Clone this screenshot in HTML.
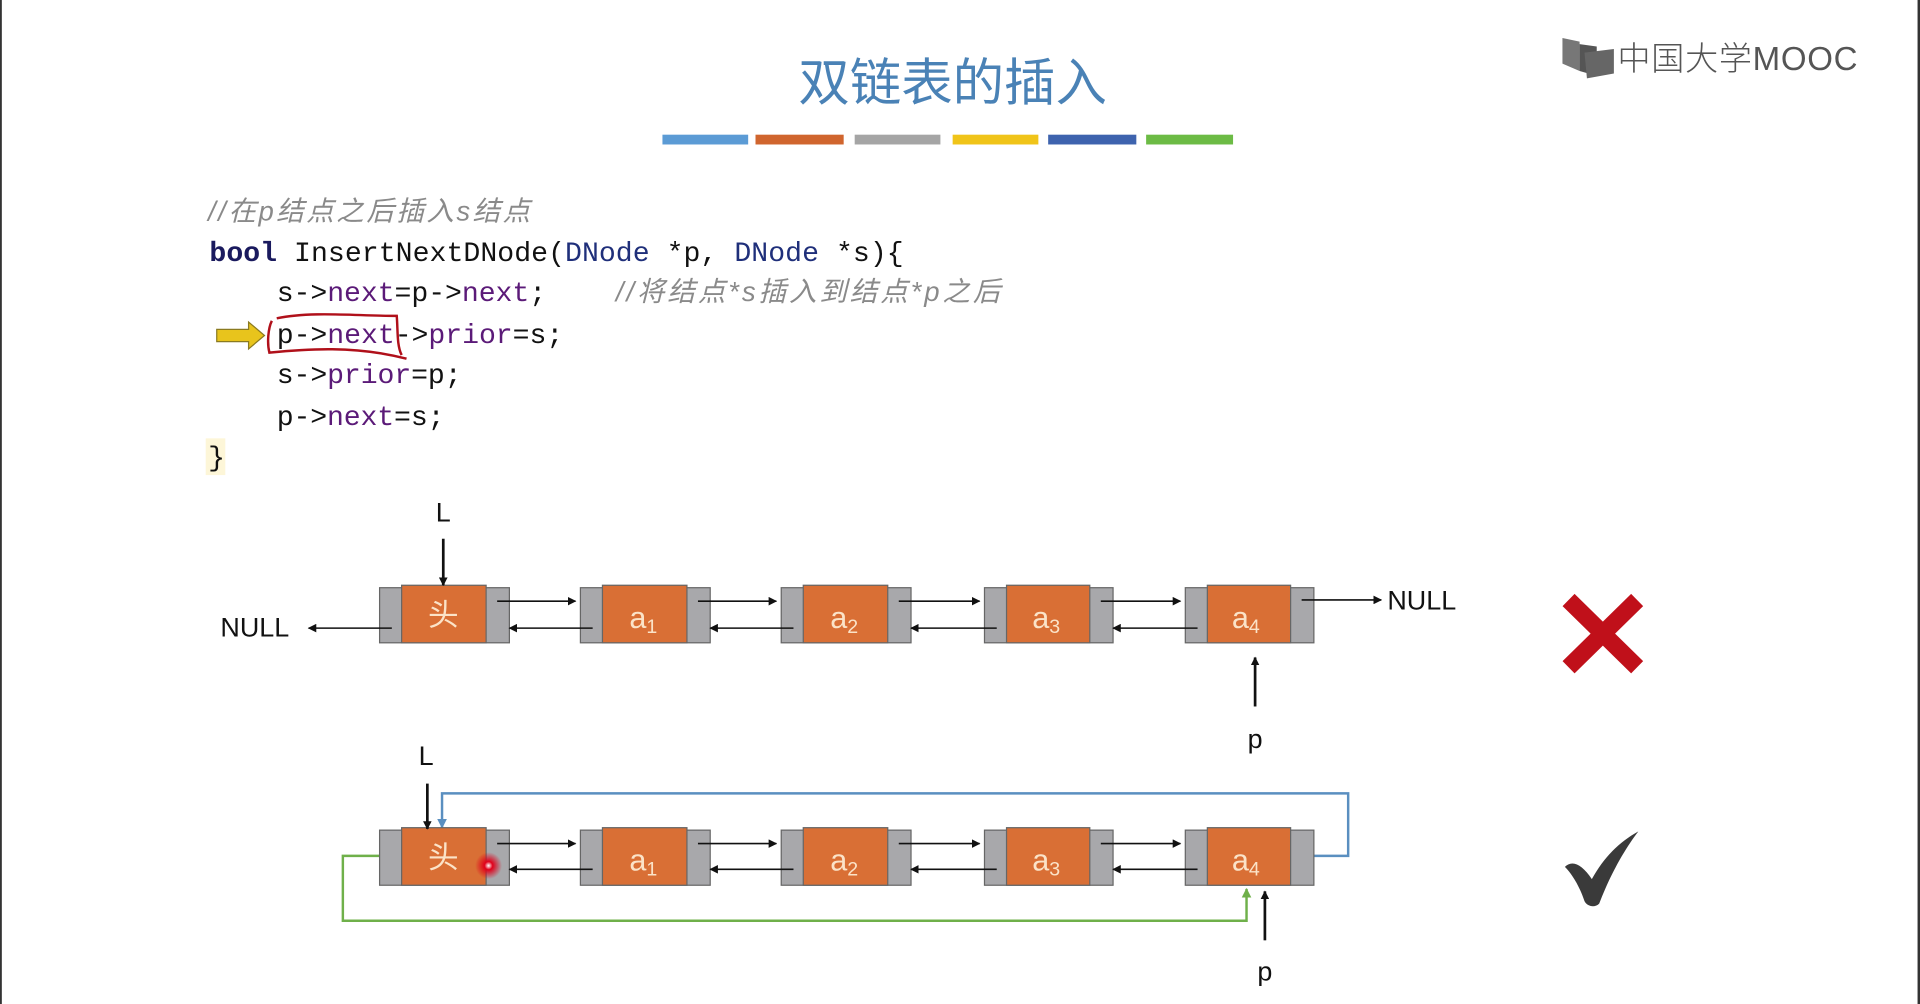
<!DOCTYPE html>
<html><head><meta charset="utf-8"><style>
html,body{margin:0;padding:0;background:#fff;overflow:hidden;width:1920px;height:1004px}
svg{display:block}
.code{font-family:"Liberation Mono","Noto Sans CJK SC",monospace;font-size:23px;fill:#111}
.kw{fill:#5b1a78}
.cm{font-family:"Liberation Sans","Noto Sans CJK SC",sans-serif;font-style:italic;fill:#8a8a8a;font-size:22.5px}
.lbl{font-family:"Liberation Sans",sans-serif;font-size:22px;fill:#111}
.nd{font-family:"Liberation Sans","Noto Sans CJK SC",sans-serif;font-size:25px;fill:#fbe3c8}
</style></head><body>
<svg width="1920" height="1004" viewBox="0 0 1568 820" preserveAspectRatio="none" xmlns="http://www.w3.org/2000/svg">
<defs>
<marker id="ah" viewBox="0 0 10 10" refX="9" refY="5" markerWidth="7" markerHeight="7" orient="auto-start-reverse" markerUnits="userSpaceOnUse"><path d="M0,0L10,5L0,10z" fill="#111"/></marker>
<marker id="ahb" viewBox="0 0 10 10" refX="9" refY="5" markerWidth="8" markerHeight="8" orient="auto" markerUnits="userSpaceOnUse"><path d="M0,0L10,5L0,10z" fill="#5a8fc0"/></marker>
<marker id="ahg" viewBox="0 0 10 10" refX="9" refY="5" markerWidth="8" markerHeight="8" orient="auto" markerUnits="userSpaceOnUse"><path d="M0,0L10,5L0,10z" fill="#6fb04a"/></marker>
<radialGradient id="rd"><stop offset="0" stop-color="#fff"/><stop offset="0.3" stop-color="#e0001a"/><stop offset="1" stop-color="#e0001a" stop-opacity="0"/></radialGradient>
</defs>
<rect x="0" y="0" width="1.5" height="820" fill="#333"/>
<rect x="1566" y="0" width="2" height="820" fill="#333"/>
<g>
<path d="M1276,31 L1290,34 L1290,58 L1276,52z" fill="#777"/>
<path d="M1290,36 L1304,38 L1304,62 L1290,58z" fill="#555"/>
<path d="M1294,43 L1318,40 L1318,60 L1296,64z" fill="#666"/>
<text x="1321" y="57" font-family="Liberation Sans,'Noto Sans CJK SC',sans-serif" font-size="27" fill="#555" font-weight="300" textLength="196">中国大学MOOC</text>
</g>
<text x="778" y="82" text-anchor="middle" font-family="'Noto Sans CJK SC',sans-serif" font-size="42" fill="#4a82b6">双链表的插入</text>
<g>
<rect x="541" y="110" width="70" height="8" fill="#5b9bd5"/>
<rect x="617" y="110" width="72" height="8" fill="#d0652e"/>
<rect x="698" y="110" width="70" height="8" fill="#a5a5a5"/>
<rect x="778" y="110" width="70" height="8" fill="#f0c419"/>
<rect x="856" y="110" width="72" height="8" fill="#3e63ae"/>
<rect x="936" y="110" width="71" height="8" fill="#6cbb45"/>
</g>
<text x="170" y="180" class="cm" textLength="263">//在p结点之后插入s结点</text>
<text x="171" y="213" class="code" textLength="567"><tspan font-weight="bold" fill="#1a1a5e">bool</tspan> InsertNextDNode(<tspan fill="#1f2f7a">DNode</tspan> *p, <tspan fill="#1f2f7a">DNode</tspan> *s){</text>
<text x="226" y="246" class="code" textLength="220">s-&gt;<tspan class="kw">next</tspan>=p-&gt;<tspan class="kw">next</tspan>;</text>
<text x="503" y="246" class="cm" textLength="314">//将结点*s插入到结点*p之后</text>
<text x="226" y="280" class="code" textLength="234">p-&gt;<tspan class="kw">next</tspan>-&gt;<tspan class="kw">prior</tspan>=s;</text>
<text x="226" y="313" class="code" textLength="151">s-&gt;<tspan class="kw">prior</tspan>=p;</text>
<text x="226" y="347" class="code" textLength="137">p-&gt;<tspan class="kw">next</tspan>=s;</text>
<rect x="168" y="358" width="16" height="30" fill="#fdf6d8"/>
<text x="170" y="380" class="code">}</text>
<path d="M177,269 L203,269 L203,263 L216,274 L203,285 L203,279 L177,279z" fill="#e8c41c" stroke="#8a7a20" stroke-width="1"/>
<path d="M222,262 C219,268 218,280 220,288 C250,285 290,282 332,293 M226,260 C255,254 290,258 324,258 C325,270 324,282 328,290" fill="none" stroke="#b0101a" stroke-width="2"/>
<g>
<g stroke="#666" stroke-width="1">
<rect x="310" y="480" width="106" height="45" fill="#a8a8ab"/><rect x="328" y="478" width="69" height="47" fill="#d96f35"/>
<rect x="474" y="480" width="106" height="45" fill="#a8a8ab"/><rect x="492" y="478" width="69" height="47" fill="#d96f35"/>
<rect x="638" y="480" width="106" height="45" fill="#a8a8ab"/><rect x="656" y="478" width="69" height="47" fill="#d96f35"/>
<rect x="804" y="480" width="105" height="45" fill="#a8a8ab"/><rect x="822" y="478" width="68" height="47" fill="#d96f35"/>
<rect x="968" y="480" width="105" height="45" fill="#a8a8ab"/><rect x="986" y="478" width="68" height="47" fill="#d96f35"/>
</g>
<text x="362" y="511" text-anchor="middle" class="nd" font-size="26">头</text>
<text x="514" y="513" class="nd">a<tspan font-size="16" dy="4">1</tspan></text>
<text x="678" y="513" class="nd">a<tspan font-size="16" dy="4">2</tspan></text>
<text x="843" y="513" class="nd">a<tspan font-size="16" dy="4">3</tspan></text>
<text x="1006" y="513" class="nd">a<tspan font-size="16" dy="4">4</tspan></text>
<g stroke="#111" stroke-width="1.3" marker-end="url(#ah)">
<line x1="406" y1="491" x2="470" y2="491"/><line x1="570" y1="491" x2="634" y2="491"/><line x1="734" y1="491" x2="800" y2="491"/><line x1="899" y1="491" x2="964" y2="491"/>
<line x1="484" y1="513" x2="416" y2="513"/><line x1="648" y1="513" x2="580" y2="513"/><line x1="814" y1="513" x2="744" y2="513"/><line x1="978" y1="513" x2="909" y2="513"/>
<line x1="320" y1="513" x2="252" y2="513"/><line x1="1063" y1="490" x2="1128" y2="490"/>
</g>
<g stroke="#111" stroke-width="2.2" marker-end="url(#ah)">
<line x1="362" y1="440" x2="362" y2="478"/>
<line x1="1025" y1="577" x2="1025" y2="537"/>
</g>
<text x="180" y="520" class="lbl">NULL</text>
<text x="1133" y="498" class="lbl">NULL</text>
<text x="362" y="426" text-anchor="middle" class="lbl" font-size="20">L</text>
<text x="1025" y="611" text-anchor="middle" class="lbl" font-size="20">p</text>
</g>
<g>
<path d="M1073,699 L1101,699 L1101,648 L361,648 L361,676" fill="none" stroke="#5a8fc0" stroke-width="2" marker-end="url(#ahb)"/>
<path d="M310,699 L280,699 L280,752 L1018,752 L1018,726" fill="none" stroke="#6fb04a" stroke-width="2" marker-end="url(#ahg)"/>
<g stroke="#666" stroke-width="1">
<rect x="310" y="678" width="106" height="45" fill="#a8a8ab"/><rect x="328" y="676" width="69" height="47" fill="#d96f35"/>
<rect x="474" y="678" width="106" height="45" fill="#a8a8ab"/><rect x="492" y="676" width="69" height="47" fill="#d96f35"/>
<rect x="638" y="678" width="106" height="45" fill="#a8a8ab"/><rect x="656" y="676" width="69" height="47" fill="#d96f35"/>
<rect x="804" y="678" width="105" height="45" fill="#a8a8ab"/><rect x="822" y="676" width="68" height="47" fill="#d96f35"/>
<rect x="968" y="678" width="105" height="45" fill="#a8a8ab"/><rect x="986" y="676" width="68" height="47" fill="#d96f35"/>
</g>
<text x="362" y="709" text-anchor="middle" class="nd" font-size="26">头</text>
<text x="514" y="711" class="nd">a<tspan font-size="16" dy="4">1</tspan></text>
<text x="678" y="711" class="nd">a<tspan font-size="16" dy="4">2</tspan></text>
<text x="843" y="711" class="nd">a<tspan font-size="16" dy="4">3</tspan></text>
<text x="1006" y="711" class="nd">a<tspan font-size="16" dy="4">4</tspan></text>
<g stroke="#111" stroke-width="1.3" marker-end="url(#ah)">
<line x1="406" y1="689" x2="470" y2="689"/><line x1="570" y1="689" x2="634" y2="689"/><line x1="734" y1="689" x2="800" y2="689"/><line x1="899" y1="689" x2="964" y2="689"/>
<line x1="484" y1="710" x2="416" y2="710"/><line x1="648" y1="710" x2="580" y2="710"/><line x1="814" y1="710" x2="744" y2="710"/><line x1="978" y1="710" x2="909" y2="710"/>
</g>
<g stroke="#111" stroke-width="2.2" marker-end="url(#ah)">
<line x1="349" y1="640" x2="349" y2="677"/>
<line x1="1033" y1="768" x2="1033" y2="728"/>
</g>
<text x="348" y="625" text-anchor="middle" class="lbl" font-size="20">L</text>
<text x="1033" y="801" text-anchor="middle" class="lbl" font-size="20">p</text>
<circle cx="399" cy="707" r="11" fill="url(#rd)"/>
</g>
<g stroke="#c0101a" stroke-width="14" stroke-linecap="butt">
<line x1="1281" y1="490" x2="1337" y2="545"/><line x1="1337" y1="490" x2="1281" y2="545"/>
</g>
<path d="M1278,708 C1284,702 1292,706 1300,718 C1310,700 1322,688 1338,679 C1328,692 1316,712 1306,738 C1302,742 1296,740 1294,736 C1290,724 1284,714 1278,708z" fill="#3a3a3a"/>
</svg>
</body></html>
